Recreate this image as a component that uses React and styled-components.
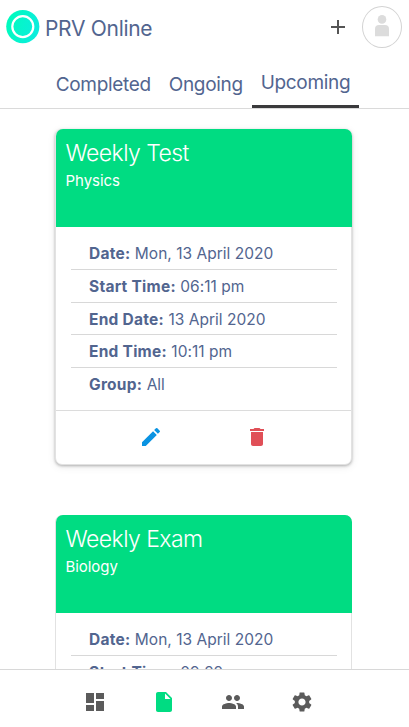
import React from 'react'
import styled, { createGlobalStyle } from 'styled-components'
import {
  MdAdd,
  MdDashboard,
  MdDelete,
  MdEdit,
  MdInsertDriveFile,
  MdPeople,
  MdSettings,
} from 'react-icons/md'

const tabs = ['Completed', 'Ongoing', 'Upcoming']

const exams = [
  {
    title: 'Weekly Test',
    subject: 'Physics',
    raised: true,
    details: [
      ['Date', 'Mon, 13 April 2020'],
      ['Start Time', '06:11 pm'],
      ['End Date', '13 April 2020'],
      ['End Time', '10:11 pm'],
      ['Group', 'All'],
    ],
  },
  {
    title: 'Weekly Exam',
    subject: 'Biology',
    raised: false,
    details: [
      ['Date', 'Mon, 13 April 2020'],
      ['Start Time', '09:22 pm'],
    ],
  },
]

const Logo = () => (
  <svg width='34' height='34' viewBox='0 0 34 34'>
    <defs>
      <linearGradient id='logo' x1='0' y1='0.3' x2='1' y2='0.6'>
        <stop offset='0' stopColor='#00fcbc' />
        <stop offset='1' stopColor='#0cecdf' />
      </linearGradient>
    </defs>
    <circle cx='16.8' cy='16.6' r='16.6' fill='url(#logo)' />
    <circle cx='16.8' cy='16.6' r='10.5' fill='none' stroke='#fff' strokeWidth='2.2' />
  </svg>
)

const Person = () => (
  <svg width='14' height='22' viewBox='0 0 14 22'>
    <circle cx='7' cy='4.4' r='4.3' />
    <path d='M0 14a4 4 0 0 1 4-4h6a4 4 0 0 1 4 4v7.3H0z' />
  </svg>
)

const ExamCard = ({ title, subject, details, raised }) => {
  return (
    <Card $raised={raised}>
      <CardHeader>
        <h2>{title}</h2>
        <p>{subject}</p>
      </CardHeader>
      <Details>
        {details.map(([label, value]) => (
          <li key={label}>
            <strong>{label}:</strong> {value}
          </li>
        ))}
      </Details>
      <Actions>
        <IconButton type='button' $color='#0a93e2'>
          <MdEdit />
        </IconButton>
        <IconButton type='button' $color='#e04f57'>
          <MdDelete />
        </IconButton>
      </Actions>
    </Card>
  )
}

const App = () => {
  return (
    <Screen>
      <GlobalStyle />
      <TopBar>
        <Logo />
        <h1>PRV Online</h1>
        <IconButton type='button' $color='#555'>
          <MdAdd />
        </IconButton>
        <Avatar>
          <Person />
        </Avatar>
      </TopBar>
      <Tabs>
        {tabs.map((tab) => (
          <Tab key={tab} type='button' $active={tab === 'Upcoming'}>
            {tab}
          </Tab>
        ))}
      </Tabs>
      <List>
        {exams.map((exam) => (
          <ExamCard key={exam.title} {...exam} />
        ))}
      </List>
      <BottomNav>
        <IconButton type='button' $color='#5b5b5b'>
          <MdDashboard />
        </IconButton>
        <IconButton type='button' $color='#00dc82'>
          <MdInsertDriveFile />
        </IconButton>
        <IconButton type='button' $color='#5b5b5b'>
          <MdPeople />
        </IconButton>
        <IconButton type='button' $color='#5b5b5b'>
          <MdSettings />
        </IconButton>
      </BottomNav>
    </Screen>
  )
}

const GlobalStyle = createGlobalStyle`
  * {
    box-sizing: border-box;
    margin: 0;
    padding: 0;
  }
  body {
    background: #fff;
    color: #52658f;
    font-family: Inter, 'Liberation Sans', sans-serif;
    overflow: hidden;
  }
  svg {
    display: block;
    flex: none;
  }
`

const Screen = styled.div`
  display: flex;
  flex-direction: column;
  height: 100vh;
`

const TopBar = styled.header`
  display: flex;
  align-items: center;
  flex: none;
  height: 53px;
  padding: 0 7px 0 6px;
  h1 {
    flex: 1;
    margin: 4px 0 0 5px;
    font-size: 21px;
    font-weight: 370;
    line-height: 26px;
    letter-spacing: -0.3px;
  }
`

const IconButton = styled.button`
  display: flex;
  border: 0;
  background: transparent;
  color: ${({ $color }) => $color};
  cursor: pointer;
  svg {
    width: 24px;
    height: 24px;
  }
`

const Avatar = styled.div`
  display: flex;
  align-items: center;
  justify-content: center;
  width: 40px;
  height: 42px;
  margin-left: 12px;
  padding-bottom: 1px;
  border: 1px solid #d3d3d3;
  border-radius: 50%;
  fill: #dcdcdc;
`

const Tabs = styled.nav`
  display: flex;
  justify-content: center;
  flex: none;
  height: 56px;
  padding-right: 3px;
  border-bottom: 1px solid #dadada;
`

const Tab = styled.button`
  padding: ${({ $active }) => ($active ? '6px 9px 0' : '7px 9px 0')};
  border: 0;
  border-bottom: ${({ $active }) => ($active ? '3px solid #3a3a3c' : '0')};
  background: transparent;
  color: inherit;
  font-family: inherit;
  font-size: 19px;
  font-weight: 370;
  letter-spacing: -0.33px;
`

const List = styled.main`
  display: flex;
  flex-direction: column;
  gap: 50px;
  flex: 1;
  min-height: 0;
  padding: 20px 57px 0 55px;
  overflow: hidden;
`

const Card = styled.article`
  flex: none;
  display: flex;
  flex-direction: column;
  height: 336px;
  border: 1px solid #e2e2e2;
  border-radius: 7px;
  background: #fff;
  box-shadow: ${({ $raised }) =>
    $raised ? '0 1px 3px rgba(0, 0, 0, 0.28), 0 2px 8px rgba(0, 0, 0, 0.08)' : 'none'};
`

const CardHeader = styled.div`
  flex: none;
  height: 98.4px;
  margin: -1px -1px 0 0;
  padding: 9px 9.5px;
  border-radius: 7px 7px 0 0;
  background: #00dc82;
  color: #fff;
  h2 {
    font-size: 23px;
    font-weight: 330;
    line-height: 30px;
    letter-spacing: -0.55px;
  }
  p {
    font-size: 15px;
    line-height: 26px;
    letter-spacing: -0.05px;
  }
`

const Details = styled.ul`
  margin: 10px 14px 0 15px;
  list-style: none;
  li {
    height: 32.7px;
    padding-left: 18px;
    border-bottom: 1px solid #d8d8d8;
    font-size: 15.5px;
    line-height: 34px;
    letter-spacing: 0.02px;
    white-space: nowrap;
  }
  li:nth-child(5) {
    border-bottom: 0;
  }
  strong {
    font-weight: 650;
    letter-spacing: 0.26px;
  }
`

const Actions = styled.div`
  display: flex;
  align-items: center;
  justify-content: space-around;
  flex: none;
  height: 54px;
  margin-top: auto;
  padding: 0 41.5px 2px;
  border-top: 1px solid #dcdcdc;
`

const BottomNav = styled.footer`
  display: flex;
  align-items: center;
  justify-content: center;
  gap: 45.2px;
  flex: none;
  height: 58px;
  padding: 7px 12px 0 0;
  border-top: 1px solid #d8d8d8;
  background: #fff;
`

export default App
